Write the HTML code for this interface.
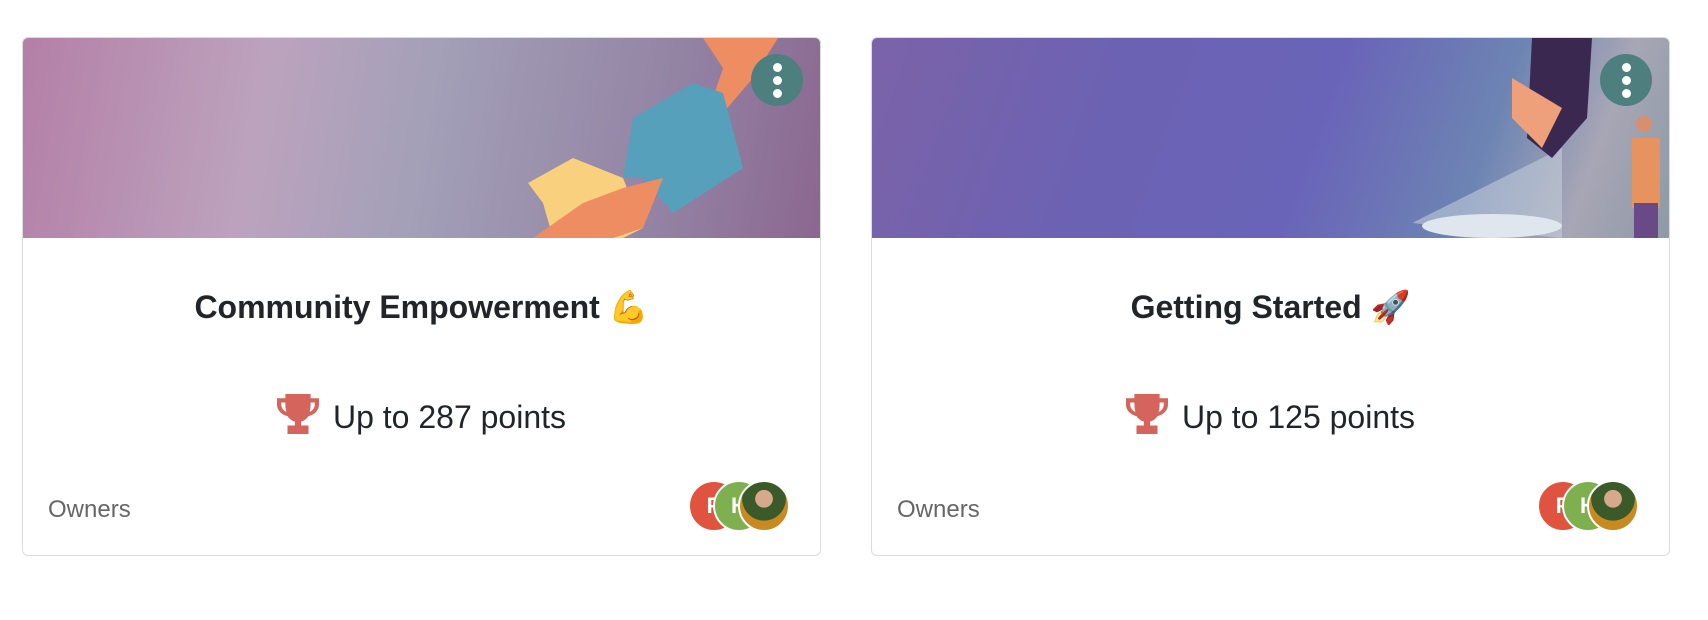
<!DOCTYPE html>
<html><head><meta charset="utf-8"><style>
body{margin:0;width:1708px;height:620px;background:#fff;font-family:"Liberation Sans",sans-serif;position:relative;overflow:hidden}
.card{position:absolute;top:37px;width:797px;height:517px;border:1.5px solid #dcdcdc;border-radius:6px;overflow:hidden;background:#fff}
.img{position:absolute;left:0;top:0;width:100%;height:200px}
.menu{position:absolute;left:728px;top:16px;width:52px;height:52px;border-radius:50%;background:#4c7f7e}
.menu i{position:absolute;left:22px;width:9px;height:9px;border-radius:50%;background:#fff}
.title{position:absolute;top:250px;width:100%;text-align:center;font-weight:bold;font-size:32px;color:#212529}
.pts{position:absolute;top:356px;width:100%;text-align:center;font-size:32px;color:#212529}
.pts svg{vertical-align:-6px;margin-right:14px}
.own{position:absolute;left:25px;top:458px;font-size:24px;color:#666}
.av{position:absolute;top:442px;width:48px;height:48px;border-radius:50%;border:2px solid #fff;color:#fff;font-weight:bold;font-size:22px;text-align:center;line-height:48px}
</style></head><body>

<div class="card" style="left:22px">
 <div class="img" style="background:linear-gradient(100deg,#b47fa7 0%,#bca3bd 30%,#a3a0b8 50%,#9383a3 80%,#8b6790 100%)">
  <svg width="797" height="200" style="position:absolute;left:0;top:0">
   <path d="M680 0 L755 0 L730 40 L700 75 L690 60 L700 30Z" fill="#ee8c62"/>
   <path d="M610 80 L670 45 L700 55 L720 130 L650 175 L620 140 L600 140Z" fill="#56a0bb"/>
   <path d="M505 145 L550 120 L600 140 L620 190 L580 210 L530 200 L520 165Z" fill="#f8d07e"/>
   <path d="M510 200 L560 165 L600 150 L640 140 L620 190 L590 200Z" fill="#ee8c62"/>
  </svg>
  <div class="menu"><i style="top:9px"></i><i style="top:22px"></i><i style="top:35px"></i></div>
 </div>
 <div class="title">Community Empowerment 💪</div>
 <div class="pts"><svg width="42" height="40" viewBox="0 0 40 38"><path d="M8 0h24v4h8v6c0 6-5 10-10 11-2 3-5 5-7 5v4h7v8H10v-8h7v-4c-2 0-5-2-7-5C5 20 0 16 0 10V4h8z M4 8v2c0 3 2 6 5 7-1-3-1-6-1-9z M36 8h-4c0 3 0 6-1 9 3-1 5-4 5-7z" fill="#d4645c"/></svg>Up to 287 points</div>
 <div class="own">Owners</div>
 <div class="av" style="left:665px;background:#e0533e">P</div>
 <div class="av" style="left:690px;background:#7fb04f">H</div>
 <div class="av" style="left:715px;background:radial-gradient(circle at 50% 35%,#d6a88c 0 22%,#3b5a2a 23% 55%,#c98a22 56%)"></div>
</div>

<div class="card" style="left:871px">
 <div class="img" style="background:linear-gradient(110deg,#7b63a8 0%,#6c62b3 30%,#6a64b8 55%,#6c84b3 75%,#a7a6b5 88%,#8e9aa6 100%)">
  <svg width="797" height="200" style="position:absolute;left:0;top:0">
   <path d="M690 110 L540 185 L690 200 Z" fill="#c9d2dc" opacity=".55"/>
   <ellipse cx="620" cy="188" rx="70" ry="12" fill="#dfe6ee"/>
   <path d="M660 0 L720 0 L715 80 L680 120 L655 100Z" fill="#3a2850"/>
   <path d="M640 40 L690 70 L670 110 L640 80Z" fill="#eea07a"/>
   <rect x="760" y="100" width="28" height="70" fill="#e6935f"/>
   <rect x="762" y="165" width="24" height="35" fill="#6a4a86"/>
   <circle cx="772" cy="86" r="8" fill="#d88f6f"/>
  </svg>
  <div class="menu"><i style="top:9px"></i><i style="top:22px"></i><i style="top:35px"></i></div>
 </div>
 <div class="title">Getting Started 🚀</div>
 <div class="pts"><svg width="42" height="40" viewBox="0 0 40 38"><path d="M8 0h24v4h8v6c0 6-5 10-10 11-2 3-5 5-7 5v4h7v8H10v-8h7v-4c-2 0-5-2-7-5C5 20 0 16 0 10V4h8z M4 8v2c0 3 2 6 5 7-1-3-1-6-1-9z M36 8h-4c0 3 0 6-1 9 3-1 5-4 5-7z" fill="#d4645c"/></svg>Up to 125 points</div>
 <div class="own">Owners</div>
 <div class="av" style="left:665px;background:#e0533e">P</div>
 <div class="av" style="left:690px;background:#7fb04f">H</div>
 <div class="av" style="left:715px;background:radial-gradient(circle at 50% 35%,#d6a88c 0 22%,#3b5a2a 23% 55%,#c98a22 56%)"></div>
</div>
</body></html>
